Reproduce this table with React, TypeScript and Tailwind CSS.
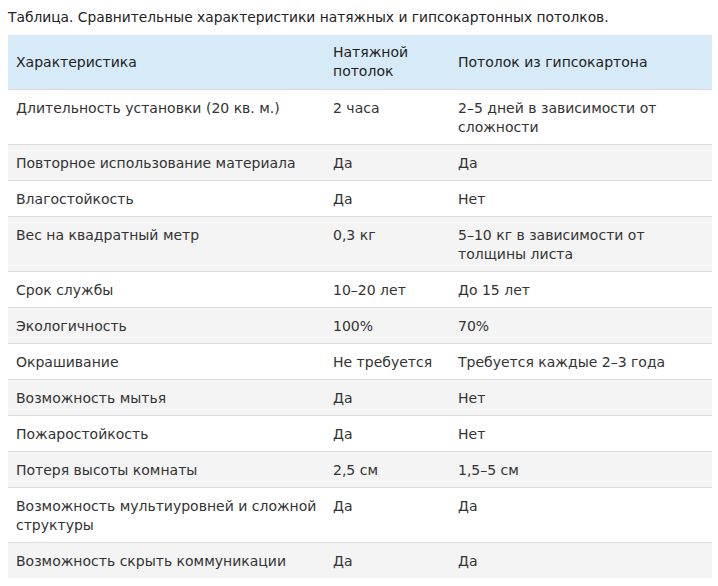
const rows: [string, string, string][] = [
  ["Длительность установки (20 кв. м.)", "2 часа", "2–5 дней в зависимости от сложности"],
  ["Повторное использование материала", "Да", "Да"],
  ["Влагостойкость", "Да", "Нет"],
  ["Вес на квадратный метр", "0,3 кг", "5–10 кг в зависимости от толщины листа"],
  ["Срок службы", "10–20 лет", "До 15 лет"],
  ["Экологичность", "100%", "70%"],
  ["Окрашивание", "Не требуется", "Требуется каждые 2–3 года"],
  ["Возможность мытья", "Да", "Нет"],
  ["Пожаростойкость", "Да", "Нет"],
  ["Потеря высоты комнаты", "2,5 см", "1,5–5 см"],
  ["Возможность мультиуровней и сложной структуры", "Да", "Да"],
  ["Возможность скрыть коммуникации", "Да", "Да"],
];

export default function App() {
  return (
    <div className="min-h-screen bg-white px-2 pt-[7px] text-[#333] [font-family:'DejaVu_Sans',Verdana,sans-serif]">
      <p className="text-[13.8px] leading-[20px] text-[#222]">
        Таблица. Сравнительные характеристики натяжных и гипсокартонных потолков.
      </p>
      <table className="mt-[8px] w-[704px] border-collapse text-[14px] leading-[19px]">
        <thead>
          <tr className="bg-[#d7eaf7] text-[#222]">
            <th className="w-[317px] px-2 py-[8px] text-left font-normal">Характеристика</th>
            <th className="w-[125px] px-2 py-[8px] text-left font-normal">Натяжной потолок</th>
            <th className="px-2 py-[8px] text-left font-normal">Потолок из гипсокартона</th>
          </tr>
        </thead>
        <tbody>
          {rows.map((r, i) => (
            <tr key={i} className={`border-t border-[#dcdcdc] ${i % 2 === 1 ? "bg-[#f4f4f4]" : "bg-white"}`}>
              <td className="px-2 pt-[9px] pb-[7px] align-top">{r[0]}</td>
              <td className="px-2 pt-[9px] pb-[7px] align-top">{r[1]}</td>
              <td className="px-2 pt-[9px] pb-[7px] align-top">{r[2]}</td>
            </tr>
          ))}
        </tbody>
      </table>
    </div>
  );
}
